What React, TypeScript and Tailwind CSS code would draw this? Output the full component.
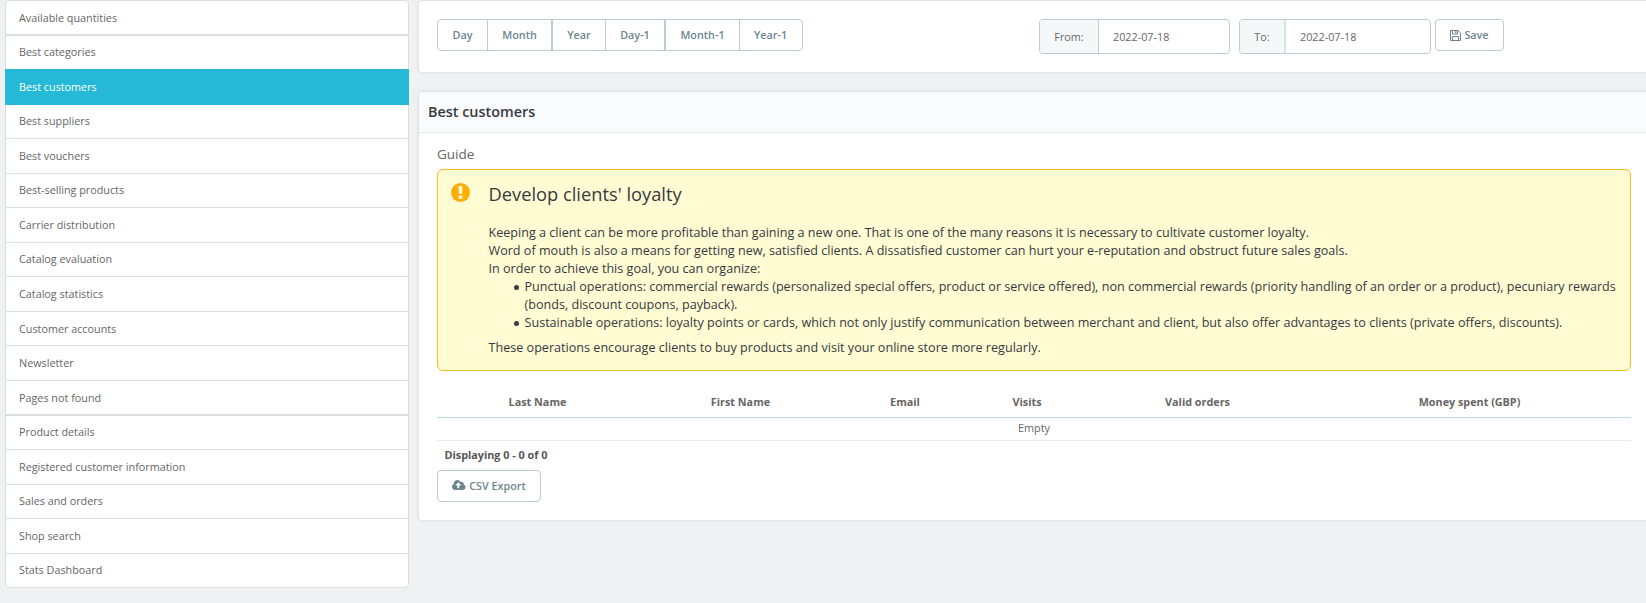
import React from "react";

const modules = [
  "Available quantities",
  "Best categories",
  "Best customers",
  "Best suppliers",
  "Best vouchers",
  "Best-selling products",
  "Carrier distribution",
  "Catalog evaluation",
  "Catalog statistics",
  "Customer accounts",
  "Newsletter",
  "Pages not found",
  "Product details",
  "Registered customer information",
  "Sales and orders",
  "Shop search",
  "Stats Dashboard",
];

const periods = [
  { label: "Day", width: "w-[50px]" },
  { label: "Month", width: "w-[65px] border-r-2" },
  { label: "Year", width: "w-[53px]" },
  { label: "Day-1", width: "w-[60px] border-r-2" },
  { label: "Month-1", width: "w-[74px]" },
  { label: "Year-1", width: "w-[61px]" },
];

const columns = [
  { label: "Last Name", width: "w-[201px]" },
  { label: "First Name", width: "w-[205px]" },
  { label: "Email", width: "w-[124px]" },
  { label: "Visits", width: "w-[120px]" },
  { label: "Valid orders", width: "w-[221px]" },
  { label: "Money spent (GBP)", width: "flex-1" },
];

function SaveIcon() {
  return (
    <svg viewBox="0 0 11 11" className="h-[11px] w-[11px]" fill="none" stroke="currentColor">
      <path d="M.5.5h7.700l2.300 2.300v7.700H.5z" />
      <path d="M2.500 10.500v-4h6v4M2.500.5v3.500h5V.5" />
      <path d="M5.800 1v2.200" strokeWidth="1.2" />
    </svg>
  );
}

function CloudUploadIcon() {
  return (
    <svg viewBox="0 0 1920 1408" className="mb-0.5 h-[10px] w-[13.5px]" fill="currentColor">
      <path d="M1280 736q0-14-9-23L919 361q-9-9-23-9t-23 9L522 712q-10 12-10 24 0 14 9 23t23 9h224v352q0 13 9.500 22.500t22.500 9.500h192q13 0 22.500-9.500t9.500-22.500V768h224q13 0 22.500-9.500t9.500-22.500zm640 288q0 159-112.500 271.500T1536 1408H448q-185 0-316.500-131.500T0 960q0-130 70-240t188-165q-2-30-2-43 0-212 150-362T768 0q156 0 285.500 87T1242 318q71-62 166-62 106 0 181 75t75 181q0 76-41 138 130 31 213.500 135.500T1920 1024z" />
    </svg>
  );
}

function WarningIcon() {
  return (
    <svg viewBox="0 0 19 19" className="mt-[13px] ml-[13px] h-[19px] w-[19px] shrink-0">
      <circle cx="9.500" cy="9.500" r="9.500" fill="#fbae05" />
      <path d="M7.500 3h4l-.4 8H7.900zM7.600 12.400h3.800v3.300H7.600z" fill="#fffbd3" />
    </svg>
  );
}

function DateField({ label, labelWidth, width }: { label: string; labelWidth: string; width: string }) {
  return (
    <div className={`flex h-[35px] overflow-hidden rounded-[4px] border border-[#bbcdd2] ${width}`}>
      <span className={`flex items-center justify-center border-r bg-[#f5f8f9] pt-px ${labelWidth}`}>{label}</span>
      <span className="flex items-center pt-px pl-[14px]">2022-07-18</span>
    </div>
  );
}

function Bullet({ children }: { children: React.ReactNode }) {
  return (
    <li className="flex">
      <span className="mt-[7px] mr-[6px] ml-[25px] h-[5px] w-[5px] shrink-0 rounded-full bg-[#363a41]" />
      <span>{children}</span>
    </li>
  );
}

export default function App() {
  return (
    <div className="flex h-[603px] w-full overflow-hidden bg-[#eff1f2] pl-[5px] font-['Open_Sans','Noto_Sans',sans-serif] text-[10.8px] text-[#666]">
      <nav className="w-[404px] shrink-0">
        {modules.map((name) => (
          <a
            key={name}
            className={`-mb-[0.9px] flex h-[35.45px] items-center border pl-[13px] first:rounded-t-[4px] last:rounded-b-[4px] ${
              name === "Best customers"
                ? "relative border-[#25b9d7] bg-[#25b9d7] text-white"
                : "border-[#ddd] bg-white"
            }`}
          >
            {name}
          </a>
        ))}
      </nav>

      <main className="ml-[9px] w-[1236px] shrink-0">
        <section className="flex h-[72.5px] items-start rounded-[4px] border border-[#dbe6e9] bg-white pt-[18px] pl-[18px] shadow-[0_0_4px_rgba(0,0,0,0.06)]">
          <div className="flex h-8 w-[365.5px] overflow-hidden rounded-[4px] border border-[#bbcdd2] font-semibold text-[#6c868e]">
            {periods.map((p) => (
              <button
                key={p.label}
                className={`flex shrink-0 items-center justify-center border-r border-[#bbcdd2] last:border-r-0 ${p.width}`}
              >
                {p.label}
              </button>
            ))}
          </div>
          <div className="ml-[236.5px] flex">
            <DateField label="From:" labelWidth="w-[59px] border-[#bbcdd2]" width="w-[191px]" />
            <DateField label="To:" labelWidth="w-[46px] border-r-2 border-[#d8e3e6]" width="ml-[9px] w-[192px]" />
            <button className="ml-1 flex h-8 w-[69px] items-center justify-center gap-[3px] rounded-[4px] border border-[#bbcdd2] font-semibold text-[#6c868e]">
              <SaveIcon />
              Save
            </button>
          </div>
        </section>

        <section className="mt-[18.5px] h-[430px] rounded-[4px] border border-[#dbe6e9] bg-white shadow-[0_0_4px_rgba(0,0,0,0.06)]">
          <h3 className="flex h-[41px] items-center rounded-t-[4px] border-b border-[#dfeaec] bg-[#fafbfc] pl-[9px] text-[14.4px] font-semibold text-[#363a41]">
            Best customers
          </h3>
          <div className="w-[1212px] pl-[18px]">
            <h4 className="mt-[12px] text-[13.5px] leading-[18px]">Guide</h4>
            <div className="mt-[6px] flex h-[202px] rounded-[6px] border border-[#fbbb22] bg-[#fffbd3] text-[12.6px] leading-[18px] text-[#363a41]">
              <WarningIcon />
              <div className="ml-[18.5px] flex-1">
                <h4 className="mt-[11px] text-[18.3px] leading-[26px]">Develop clients&#39; loyalty</h4>
                <div className="mt-[17px]">
                  Keeping a client can be more profitable than gaining a new one. That is one of the many reasons it is
                  necessary to cultivate customer loyalty.
                  <br />
                  Word of mouth is also a means for getting new, satisfied clients. A dissatisfied customer can hurt
                  your e-reputation and obstruct future sales goals.
                  <br />
                  In order to achieve this goal, you can organize:
                  <ul className="mb-[7px]">
                    <Bullet>
                      Punctual operations: commercial rewards (personalized special offers, product or service
                      offered), non commercial rewards (priority handling of an order or a product), pecuniary rewards
                      <br />
                      (bonds, discount coupons, payback).
                    </Bullet>
                    <Bullet>
                      Sustainable operations: loyalty points or cards, which not only justify communication between
                      merchant and client, but also offer advantages to clients (private offers, discounts).
                    </Bullet>
                  </ul>
                  These operations encourage clients to buy products and visit your online store more regularly.
                </div>
              </div>
            </div>

            <div className="mt-[16px] flex h-[31px] border-b border-[#bdd8e6] font-bold">
              {columns.map((c) => (
                <div key={c.label} className={`flex items-center justify-center ${c.width}`}>
                  {c.label}
                </div>
              ))}
            </div>
            <div className="flex h-[23px] items-center justify-center border-b border-[#eaedef] pb-px">Empty</div>
            <div className="mt-[6px] pl-[7.500px] leading-[16px] font-bold text-[#555]">Displaying 0 - 0 of 0</div>
            <button className="mt-[7px] flex h-8 w-[104px] items-center justify-center gap-[3.5px] rounded-[4px] border border-[#bbcdd2] font-semibold text-[#6c868e]">
              <CloudUploadIcon />
              CSV Export
            </button>
          </div>
        </section>
      </main>
    </div>
  );
}
